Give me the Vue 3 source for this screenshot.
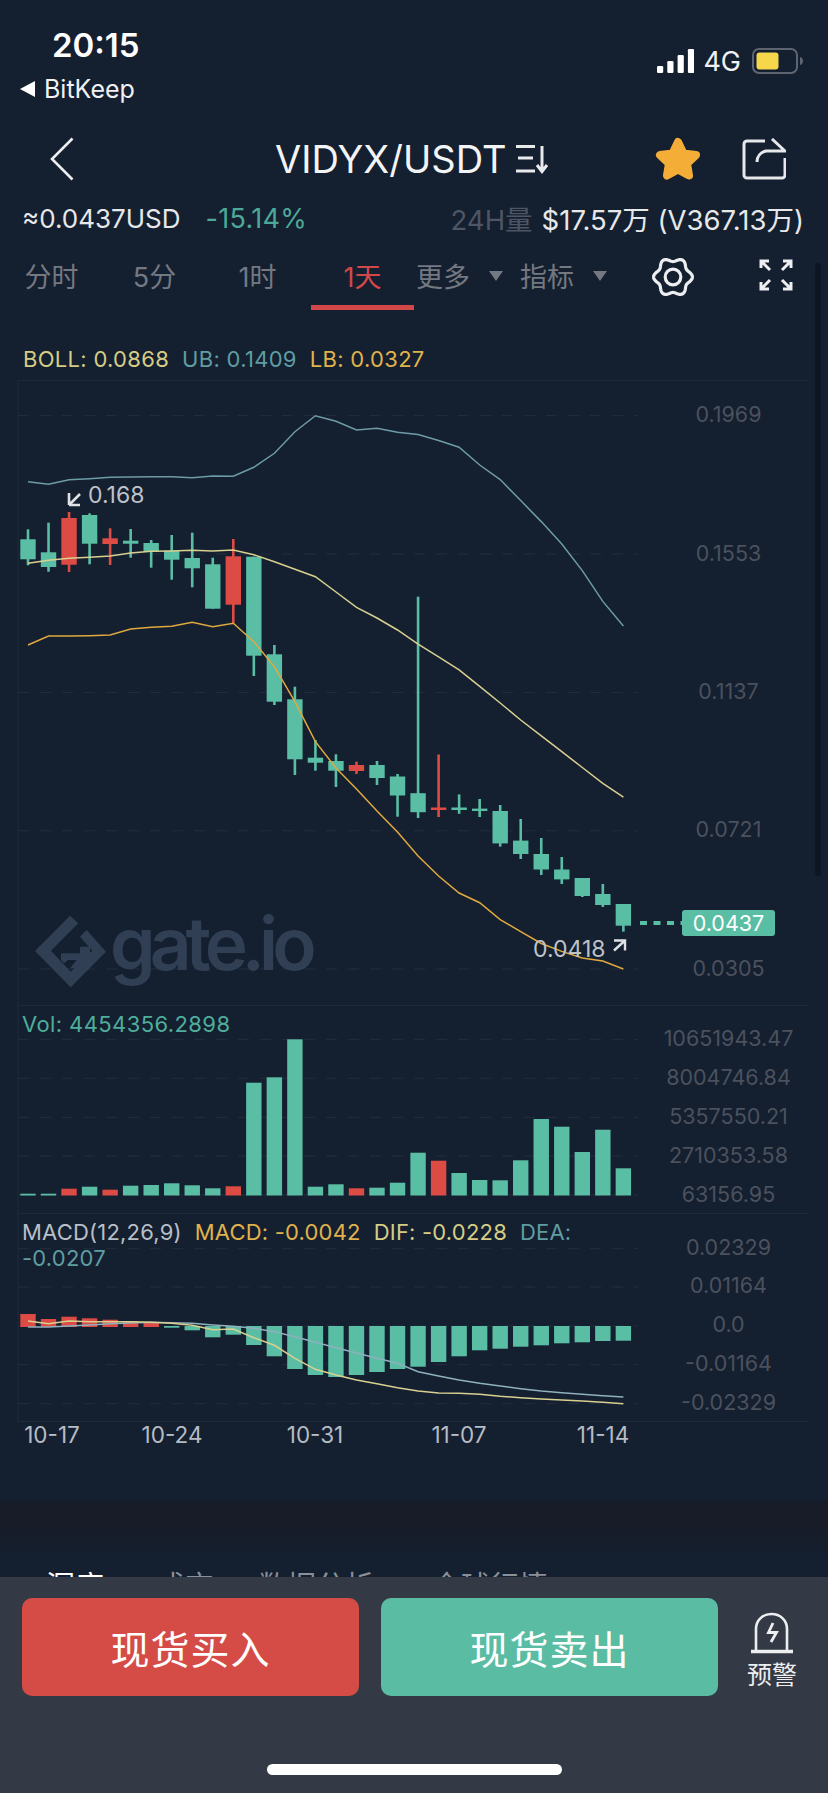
<template>
  <div class="page">
    <header class="status-bar">
      <div class="status-left">
        <div class="time">20:15</div>
        <div class="back-app"><span class="back-tri"></span>BitKeep</div>
      </div>
      <div class="status-right">
        <svg class="signal" width="37" height="24" viewBox="0 0 37 24">
          <rect v-for="(h, i) in [7, 12, 18, 24]" :key="i" :x="i * 10.3" :y="24 - h" width="6.2" :height="h" rx="1.2" fill="#fff" />
        </svg>
        <span class="net">4G</span>
        <svg class="battery" width="52" height="26" viewBox="0 0 52 26">
          <rect x="1" y="1" width="44" height="24" rx="6" fill="none" stroke="#5e6470" stroke-width="2" />
          <rect x="4.5" y="4.5" width="22" height="17" rx="3" fill="#f6d64a" />
          <path d="M48 9c2 .5 3 2 3 4s-1 3.500-3 4z" fill="#5e6470" />
        </svg>
      </div>
    </header>

    <nav class="nav">
      <svg class="back" width="24" height="44" viewBox="0 0 24 44">
        <path d="M22.500 1.500 2 22l20.500 20.500" fill="none" stroke="#eceef0" stroke-width="2.600" />
      </svg>
      <div class="title">
        <span>VIDYX/USDT</span>
        <svg width="36" height="30" viewBox="0 0 36 30">
          <path d="M1 2.500h19M3 14h15M1 27h19M27 2v25M22 21l5 6.500 5-6.500" fill="none" stroke="#e8eaec" stroke-width="3" />
        </svg>
      </div>
      <svg class="star" width="46" height="44" viewBox="0 0 46 44">
        <polygon points="23,5 28.500,16.500 41,18 32,26.500 34,38.500 23,32.500 12,38.500 14,26.500 5,18 17.500,16.500" fill="#f4ae38" stroke="#f4ae38" stroke-width="8" stroke-linejoin="round" />
      </svg>
      <svg class="share" width="44" height="42" viewBox="0 0 44 42">
        <path d="M23 3H5a3 3 0 0 0-3 3v31a3 3 0 0 0 3 3h35a3 3 0 0 0 3-3V20" fill="none" stroke="#e6e8ea" stroke-width="3" />
        <path d="M15 24c0-6 4-10 9-11h19L30 1" fill="none" stroke="#e6e8ea" stroke-width="3" />
      </svg>
    </nav>

    <section class="stats">
      <span class="usd">≈0.0437USD</span>
      <span class="change">-15.14%</span>
      <span class="vol-label">24H量</span>
      <span class="vol-value">$17.57万 (V367.13万)</span>
    </section>

    <section class="tabs">
      <div v-for="t in tabs" :key="t" class="tab" :class="{ active: t === '1天' }">{{ t }}</div>
      <div v-for="t in ['更多', '指标']" :key="t" class="drop">{{ t }}<span class="tri"></span></div>
      <svg class="gear" width="44" height="40" viewBox="-22 -20 44 40">
        <path :d="gearPath" fill="none" stroke="#eceef0" stroke-width="3.200" />
        <circle r="7.800" fill="none" stroke="#eceef0" stroke-width="3.200" />
      </svg>
      <svg class="full" width="34" height="32" viewBox="0 0 34 32">
        <path d="M2 9V2h8M2 2l9 9M24 2h8v7M32 2l-9 9M2 23v7h8M2 30l9-9M32 23v7h-8M32 30l-9-9" fill="none" stroke="#eceef0" stroke-width="3" />
      </svg>
    </section>

    <section class="legend">
      <span class="c-boll">BOLL: 0.0868</span>
      <span class="c-ub">UB: 0.1409</span>
      <span class="c-lb">LB: 0.0327</span>
    </section>

    <svg class="pane" width="828" height="625" viewBox="0 380 828 625">
      <path d="M18 380.500H808M18 380V1005" stroke="#1f2a39" fill="none" />
      <line v-for="y in mainGrid" :key="y" x1="18" x2="638" :y1="y" :y2="y" class="grid" />
      <g fill="#303f53">
        <polygon points="70,915.700 78.300,923.300 51,950.700 70.700,971.700 92.300,950.700 80,936.700 86.700,930 106,951.700 70.700,987.300 35,951" />
        <polygon points="61,953.300 80,953.300 80,946.700 90,946.700 90,956.700 76.700,968.300 70,968.300 76.700,960 68,960 64,963.300 61,960" />
        <text x="110" y="970" class="logo">gate.io</text>
      </g>
      <g v-for="(c, i) in candles" :key="i" :fill="c[4] ? red : green">
        <rect :x="cx(i) - 1.300" :y="c[0]" width="2.600" :height="c[3] - c[0]" />
        <rect :x="cx(i) - 7.700" :y="c[1]" width="15.400" :height="c[2] - c[1]" />
      </g>
      <polyline :points="line(ub)" class="curve" stroke="#6d9ca6" />
      <polyline :points="line(mb)" class="curve" stroke="#d9d090" />
      <polyline :points="line(lb)" class="curve" stroke="#e0a93f" />

      <path d="M69 505V493M69 505h11M69 505l11-11" fill="none" stroke="#dfe2e5" stroke-width="2.600" />
      <text x="88" y="503" class="note">0.168</text>
      <text x="533" y="957" class="note">0.0418</text>
      <path d="M614 940.500h11v10M625 940.500l-11 10" fill="none" stroke="#dfe2e5" stroke-width="2.400" />

      <line x1="640" x2="684" y1="923" y2="923" stroke="#5abea5" stroke-width="4" stroke-dasharray="7 6.500" />
      <rect x="682" y="910" width="93" height="26" rx="3" fill="#5abea5" />
      <text x="728.500" y="931" class="tag">0.0437</text>
      <text v-for="(t, i) in mainAxis" :key="t" x="728.500" :y="mainGrid[i] + 6.500" class="axis">{{ t }}</text>
    </svg>

    <div class="pane-wrap">
      <div class="vol-title">Vol: 4454356.2898</div>
      <svg class="pane" width="828" height="208" viewBox="0 1005 828 208">
        <path d="M18 1005.500H808M18 1005V1213" stroke="#1f2a39" fill="none" />
        <line v-for="y in volGrid" :key="y" x1="18" x2="638" :y1="y" :y2="y" class="grid" />
        <rect v-for="(b, i) in vols" :key="i" :x="cx(i) - 7.700" :y="b" width="15.400" :height="1195.500 - b" :fill="volRed.includes(i) ? red : green" />
        <text v-for="(t, i) in volAxis" :key="t" x="728.500" :y="volGrid[i] + 6.500" class="axis">{{ t }}</text>
      </svg>
    </div>

    <div class="pane-wrap">
      <div class="macd-title">
        <span class="c-macd">MACD(12,26,9)</span>
        <span class="c-lb">MACD: -0.0042</span>
        <span class="c-boll">DIF: -0.0228</span>
        <span class="c-ub">DEA:</span>
        <span class="c-ub wrap">-0.0207</span>
      </div>
      <svg class="pane" width="828" height="209" viewBox="0 1212 828 209">
        <path d="M18 1212.500H808M18 1420.500H808M18 1212V1421" stroke="#1f2a39" fill="none" />
        <line v-for="y in macdGrid" :key="y" x1="18" x2="638" :y1="y" :y2="y" class="grid" />
        <rect v-for="(b, i) in macd" :key="i" :x="cx(i) - 7.700" :y="i < 7 ? b : 1325" width="15.400" :height="i < 7 ? 1326 - b : b - 1325" :fill="i < 7 ? red : green" />
        <polyline :points="line(dea)" class="curve" stroke="#8fb0bd" />
        <polyline :points="line(dif)" class="curve" stroke="#d9d090" />
        <text v-for="(t, i) in macdAxis" :key="t" x="728.500" :y="macdGrid[i] + 6" class="axis">{{ t }}</text>
      </svg>
    </div>

    <div class="dates">
      <span v-for="d in dates" :key="d">{{ d }}</span>
    </div>

    <div class="gap-band"></div>

    <div class="info-tabs">
      <span class="on">深度</span>
      <span>成交</span>
      <span class="data-tab">数据分析</span>
      <span class="world-tab">全球行情</span>
    </div>

    <div class="scroll-thumb"></div>

    <footer class="action-bar">
      <div class="actions">
        <button class="btn buy">现货买入</button>
        <button class="btn sell">现货卖出</button>
        <div class="alert">
          <svg width="44" height="42" viewBox="0 0 44 42">
            <path d="M6 38.500V17C6 8 13 2 21.500 2S37 8 37 17v21.500" fill="none" stroke="#eceef0" stroke-width="2.600" />
            <path d="M1 39.500h42" stroke="#eceef0" stroke-width="3.400" />
            <path d="M23 11l-4.500 9.500h8L21 30" fill="none" stroke="#eceef0" stroke-width="2.800" />
          </svg>
          <span>预警</span>
        </div>
      </div>
      <div class="home-bar"></div>
    </footer>
  </div>
</template>

<script setup>
const green = '#5abea5'
const red = '#dd4b45'

const tabs = ['分时', '5分', '1时', '1天']
const dates = ['10-17', '10-24', '10-31', '11-07', '11-14']

const cx = (i) => 28 + 20.53 * i
const line = (arr) => arr.map((y, i) => `${cx(i).toFixed(1)},${y}`).join(' ')

// high, body top, body bottom, low, red?
const candles = [
  [529.3, 539.3, 559.3, 565.3, 0],
  [522.7, 552.3, 567, 571.7, 0],
  [512, 518, 564.7, 572, 1],
  [513.3, 515, 543.7, 564.3, 0],
  [528.3, 538.3, 544, 565, 1],
  [529, 540.7, 543.7, 557.7, 0],
  [540, 543, 551.7, 567.7, 0],
  [535, 550.7, 559.7, 579.7, 0],
  [532.7, 558, 568.3, 587.3, 0],
  [557.7, 564.3, 608.7, 608.7, 0],
  [539, 556.3, 604.7, 623.3, 1],
  [556.7, 556.7, 655.7, 676, 0],
  [645, 654.3, 701.7, 705, 0],
  [686.7, 699.3, 759.3, 775, 0],
  [740, 757.7, 762.7, 770.7, 0],
  [754.3, 761, 770.7, 787, 0],
  [761.7, 765, 771, 774, 1],
  [761, 765, 778, 785, 0],
  [774, 776.5, 795.5, 816.7, 0],
  [596.7, 793.2, 812.2, 818, 0],
  [754.5, 807.5, 810, 817, 1],
  [794.4, 807.5, 810, 813.8, 0],
  [799, 808.6, 811, 817, 0],
  [805, 811, 843.4, 846.6, 0],
  [819, 840.6, 854, 859, 0],
  [838, 854, 869.5, 875, 0],
  [857, 869.5, 879.4, 884, 0],
  [878, 878, 896, 897, 0],
  [884, 894, 905, 907, 0],
  [904, 904, 925.7, 931.6, 0]
]

const ub = [481.7, 484.3, 479.7, 478.7, 477.3, 477, 476.7, 476.7, 477.7, 476, 476.3, 467.3, 453.3, 431.7, 415.7, 421.3, 430, 428.3, 432.3, 434.6, 440.5, 447.2, 465, 479.6, 500.6, 521.6, 544, 570.6, 601.4, 626]
const mb = [563.3, 560.3, 558.3, 557.3, 556, 553, 551.3, 551, 550.3, 551, 550, 554.7, 561.7, 569.3, 576.7, 592, 607.3, 618, 630, 644.1, 656.8, 669.8, 686.4, 703, 720, 735.9, 751.7, 767.5, 783.3, 797.2]
const lb = [645, 636, 636, 635.7, 635, 629, 627.3, 626.3, 622.3, 626.7, 623.3, 641.7, 666.7, 701.7, 741.7, 768, 789, 811, 832, 856, 876, 893, 902.7, 919.7, 931.6, 943.5, 951.4, 958, 961, 969]

const vols = [1193.7, 1193.7, 1188.7, 1186.7, 1189.7, 1185.7, 1185, 1183.3, 1185.3, 1188.3, 1186.3, 1082.7, 1077.3, 1039.3, 1186.7, 1184.3, 1188.3, 1187.7, 1182.7, 1152.7, 1160.7, 1173, 1180, 1180.3, 1160.3, 1119, 1126.7, 1152, 1129.7, 1168.3]
const volRed = [2, 4, 10, 16, 20]

const macd = [1313, 1318, 1315.7, 1317.3, 1318.7, 1320, 1321.7, 1326.7, 1329.3, 1336.3, 1333.7, 1344, 1355.3, 1368, 1374, 1376, 1374, 1371, 1368, 1365.7, 1361, 1355.3, 1349.3, 1347.7, 1345.7, 1344.3, 1342.3, 1341.3, 1340, 1339.7]
const dif = [1320, 1322.7, 1320, 1320.7, 1320.7, 1320.7, 1321.3, 1322.3, 1324.3, 1328.7, 1328, 1336.7, 1344.3, 1357.3, 1368.3, 1374, 1379, 1382.7, 1386.7, 1390, 1392, 1392.3, 1393.3, 1395.3, 1396.7, 1398, 1399, 1400, 1401.3, 1402.7]
const dea = [1326, 1326, 1325, 1324, 1322.7, 1322, 1321.3, 1321.7, 1322.3, 1324, 1325.3, 1327.3, 1330.7, 1335.7, 1341.3, 1346.7, 1352, 1357.3, 1362.3, 1370.7, 1375, 1379, 1382.3, 1385, 1387.7, 1390, 1391.7, 1393.3, 1394.7, 1396]

const mainGrid = [415.6, 554, 692.4, 830.8, 969]
const volGrid = [1039.3, 1078.3, 1117.3, 1156, 1195]
const macdGrid = [1247.7, 1286, 1325, 1363.7, 1402.7]

const mainAxis = ['0.1969', '0.1553', '0.1137', '0.0721', '0.0305']
const volAxis = ['10651943.47', '8004746.84', '5357550.21', '2710353.58', '63156.95']
const macdAxis = ['0.02329', '0.01164', '0.0', '-0.01164', '-0.02329']

// six-lobed cog outline
const gearPath = (() => {
  const pts = []
  for (let i = 0; i < 120; i++) {
    const a = (i / 120) * Math.PI * 2
    const r = 17.4 + 2 * Math.cos(6 * a)
    pts.push(`${(r * Math.cos(a)).toFixed(2)} ${(r * Math.sin(a)).toFixed(2)}`)
  }
  return 'M' + pts.join('L') + 'Z'
})()
</script>

<style>
html, body {
  margin: 0;
  background: #141f30;
}
</style>

<style scoped>
.page {
  position: relative;
  width: 828px;
  height: 1793px;
  overflow: hidden;
  background: #141f30;
  color: #e8eaec;
  font-family: Inter, "Noto Sans CJK SC", sans-serif;
}

.status-bar {
  height: 118px;
  box-sizing: border-box;
  display: flex;
  justify-content: space-between;
  padding: 25px 24px 0 20px;
}
.time {
  margin-left: 32px;
  font-size: 33px;
  line-height: 40px;
  font-weight: 600;
  color: #fff;
}
.back-app {
  display: flex;
  align-items: center;
  margin-top: 9px;
  font-size: 25px;
  line-height: 30px;
  color: #f0f1f3;
}
.back-tri {
  width: 0;
  height: 0;
  margin-right: 9px;
  border-style: solid;
  border-width: 8px 15px 8px 0;
  border-color: transparent #fff transparent transparent;
}
.status-right {
  display: flex;
  align-items: center;
  height: 26px;
  margin-top: 23px;
}
.net {
  margin-left: 9px;
  font-size: 27px;
  color: #f0f1f3;
}
.battery {
  margin-left: 11px;
}

.nav {
  height: 82px;
  display: flex;
  align-items: center;
  padding-left: 50px;
}
.title {
  display: flex;
  align-items: center;
  margin-left: 201px;
  width: 273px;
  font-size: 38px;
  line-height: 44px;
  color: #f3f4f5;
}
.title svg {
  margin-left: 9px;
  flex: none;
}
.star {
  margin-left: 107px;
}
.share {
  margin-left: 41px;
}

.stats {
  height: 36px;
  display: flex;
  align-items: center;
  padding-left: 22px;
  font-size: 26px;
  white-space: nowrap;
  color: #e6e8ea;
}
.change {
  margin-left: 25px;
  font-size: 27px;
  letter-spacing: 0.3px;
  color: #4ca898;
}
.vol-label {
  margin-left: auto;
  font-size: 27.500px;
  color: #4e5563;
}
.vol-value {
  margin-left: 9px;
  margin-right: 24px;
  font-size: 27.500px;
}

.tabs {
  height: 74px;
  display: flex;
  align-items: center;
  font-size: 27px;
  color: #737881;
}
.tab {
  width: 103px;
  height: 74px;
  box-sizing: border-box;
  padding-top: 24px;
  line-height: 36px;
  text-align: center;
}
.tab.active {
  margin-left: 2px;
  color: #d24848;
  border-bottom: 5px solid #d24848;
}
.drop {
  width: 104px;
  display: flex;
  align-items: center;
  white-space: nowrap;
  padding-top: 5px;
}
.drop:nth-child(5) {
  margin-left: 2px;
}
.tri {
  margin-left: 19px;
  width: 0;
  height: 0;
  border-style: solid;
  border-width: 10px 7.500px 0;
  border-color: #737881 transparent transparent;
}
.gear {
  margin-left: 27px;
  margin-top: 7px;
}
.full {
  margin-left: 64px;
  margin-top: 4px;
}

.legend {
  height: 70px;
  box-sizing: border-box;
  display: flex;
  align-items: flex-end;
  gap: 13px;
  padding: 0 0 10px 23px;
  font-size: 22px;
  line-height: 22px;
  letter-spacing: 0.3px;
}
.c-boll { color: #d6cd85; }
.c-ub { color: #5f9da3; }
.c-lb { color: #e0b34a; }
.c-macd { color: #b9bfc7; }

.pane {
  display: block;
}
.pane-wrap {
  position: relative;
}
.grid {
  stroke: #232e3e;
  stroke-dasharray: 11 11;
}
.curve {
  fill: none;
  stroke-width: 1.500;
}
.note {
  font-size: 23px;
  fill: #bfc3c9;
}
.tag {
  font-size: 21.500px;
  fill: #fff;
  text-anchor: middle;
}
.axis {
  font-size: 21.500px;
  fill: #4b515d;
  text-anchor: middle;
}
.logo {
  font-size: 73px;
  font-weight: 600;
  letter-spacing: -6px;
}

.vol-title {
  position: absolute;
  left: 22px;
  top: 7px;
  font-size: 22px;
  line-height: 24px;
  letter-spacing: 0.4px;
  color: #4fae9b;
}
.macd-title {
  position: absolute;
  left: 22px;
  top: 6px;
  width: 590px;
  display: flex;
  flex-wrap: wrap;
  column-gap: 13px;
  font-size: 22px;
  line-height: 26px;
  letter-spacing: 0.2px;
}
.wrap {
  flex: 0 0 100%;
}

.dates {
  position: relative;
  height: 79px;
  font-size: 22.500px;
  color: #b6bcc4;
}
.dates span {
  position: absolute;
  top: 0;
  line-height: 26px;
  transform: translateX(-50%);
}
.dates span:nth-child(1) { left: 52px; }
.dates span:nth-child(2) { left: 172px; }
.dates span:nth-child(3) { left: 315px; }
.dates span:nth-child(4) { left: 459px; }
.dates span:nth-child(5) { left: 603px; }

.gap-band {
  height: 58px;
  background: linear-gradient(#171c28 0, #171c28 24px, #141f30 100%);
}
.info-tabs {
  display: flex;
  gap: 52px;
  padding: 8px 0 0 46px;
  font-size: 29px;
  line-height: 40px;
  color: #8a8f98;
}
.info-tabs .on {
  color: #fff;
}
.info-tabs .data-tab {
  margin-left: -8px;
}
.info-tabs .world-tab {
  margin-left: 6px;
}

.scroll-thumb {
  position: absolute;
  left: 815px;
  top: 263px;
  width: 6px;
  height: 613px;
  background: #0e1626;
  border-radius: 3px;
}

.action-bar {
  position: absolute;
  left: 0;
  right: 0;
  bottom: 0;
  height: 216px;
  background: #343a45;
}
.actions {
  display: flex;
  align-items: flex-start;
  padding: 21px 0 0 22px;
  gap: 22px;
}
.btn {
  width: 337px;
  height: 98px;
  border: 0;
  border-radius: 10px;
  color: #fff;
  font-family: inherit;
  font-size: 39px;
  letter-spacing: 1px;
}
.buy { background: #d54b46; }
.sell { background: #5abda3; }
.alert {
  display: flex;
  flex-direction: column;
  align-items: center;
  width: 80px;
  margin-left: -8px;
  margin-top: 14px;
  font-size: 25px;
  color: #eceef0;
}
.alert span {
  margin-top: 5px;
  line-height: 32px;
}
.home-bar {
  position: absolute;
  left: 267px;
  top: 187px;
  width: 295px;
  height: 11px;
  border-radius: 6px;
  background: #fff;
}
</style>
